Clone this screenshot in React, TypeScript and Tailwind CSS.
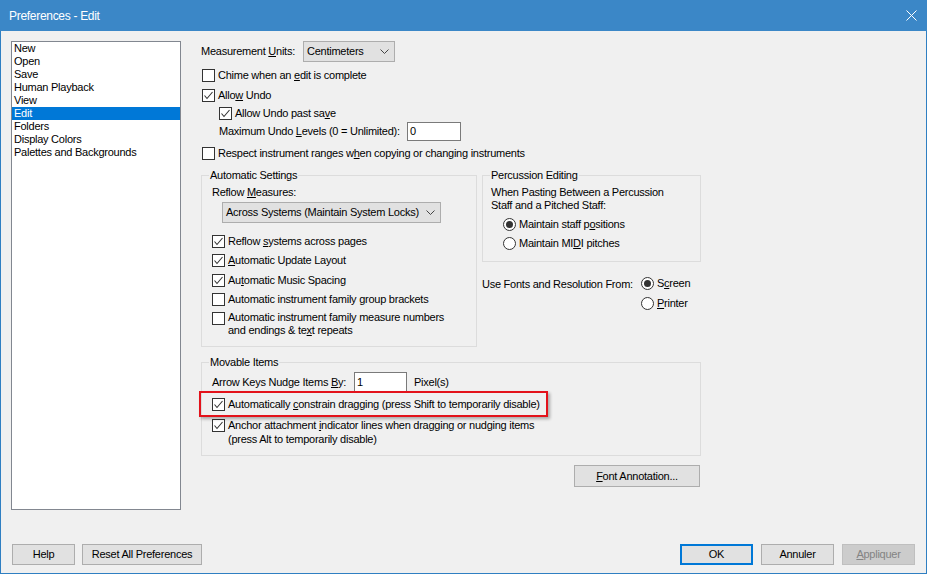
import React from 'react';

type Node = React.ReactNode;

function Box({ checked }: { checked?: boolean }) {
  return (
    <span className="w-[13px] h-[13px] shrink-0 border border-[#333333] bg-white flex items-center justify-center">
      {checked && (
        <svg width="11" height="11" viewBox="0 0 11 11">
          <path d="M1.5 5.5 L4 8.5 L9.5 2" stroke="#333333" strokeWidth="1.1" fill="none" />
        </svg>
      )}
    </span>
  );
}

function Radio({ on }: { on?: boolean }) {
  return (
    <span className="w-[13px] h-[13px] shrink-0 rounded-full border border-[#333333] bg-white flex items-center justify-center">
      {on && <span className="w-[7px] h-[7px] rounded-full bg-[#333333]" />}
    </span>
  );
}

function Check({ checked, label, h = 'h-[20px]', className = '' }: { checked?: boolean; label: Node; h?: string; className?: string }) {
  return (
    <div className={`flex items-center ${h} ${className}`}>
      <Box checked={checked} />
      <span className="ml-[3px] leading-[13px]">{label}</span>
    </div>
  );
}

function CheckMulti({ checked, lines, className = '', lead = 'leading-[13px]' }: { checked?: boolean; lines: Node[]; className?: string; lead?: string }) {
  return (
    <div className={`flex items-start ${className}`}>
      <Box checked={checked} />
      <div className={`ml-[3px] -mt-[1px] ${lead}`}>
        {lines.map((l, i) => (
          <div key={i}>{l}</div>
        ))}
      </div>
    </div>
  );
}

function U({ children }: { children: Node }) {
  return <span className="underline underline-offset-[1px] decoration-1">{children}</span>;
}

function Chevron() {
  return (
    <svg width="9" height="5" viewBox="0 0 9 5" className="shrink-0">
      <path d="M0.5 0.5 L4.5 4.5 L8.5 0.5" stroke="#444444" strokeWidth="1" fill="none" />
    </svg>
  );
}

function Group({ title, className, children }: { title: string; className: string; children: Node }) {
  return (
    <div className={`relative border border-[#dcdcdc] ${className}`}>
      <span className="absolute -top-[7px] left-[7px] px-[1px] bg-[#f0f0f0] leading-[13px]">{title}</span>
      {children}
    </div>
  );
}

function Button({ label, className = '', primary, disabled }: { label: Node; className?: string; primary?: boolean; disabled?: boolean }) {
  const base = disabled
    ? 'bg-[#cccccc] border border-[#bfbfbf] text-[#838383]'
    : primary
    ? 'bg-[#e1e1e1] border-2 border-[#0078d7] text-black'
    : 'bg-[#e1e1e1] border border-[#adadad] text-black';
  return <div className={`flex items-center justify-center h-[21px] ${base} ${className}`}>{label}</div>;
}

const items = ['New', 'Open', 'Save', 'Human Playback', 'View', 'Edit', 'Folders', 'Display Colors', 'Palettes and Backgrounds'];

export default function App() {
  return (
    <div className="w-[927px] h-[574px] flex flex-col bg-[#2f7fc2] font-['Liberation_Sans',Arial,sans-serif] text-[11px] tracking-[-0.25px] whitespace-nowrap text-black">
      <div className="h-[31px] shrink-0 bg-[#3b87c7] flex items-center justify-between pl-[9px] pr-[10px] text-white text-[12px]">
        <span className="tracking-[-0.3px]">Preferences - Edit</span>
        <svg width="11" height="11" viewBox="0 0 11 11">
          <path d="M0.5 0.5 L10.5 10.5 M10.5 0.5 L0.5 10.5" stroke="#ffffff" strokeWidth="1" />
        </svg>
      </div>

      <div className="flex-1 mx-px mb-px bg-[#f0f0f0] flex flex-col">
        <div className="flex pt-[10px] pl-[10px]">
          <div className="w-[170px] h-[469px] border border-[#828790] bg-white">
            {items.map((it) => (
              <div key={it} className={`h-[13px] leading-[13px] pl-[2px] ${it === 'Edit' ? 'bg-[#0078d7] text-white' : ''}`}>
                {it}
              </div>
            ))}
          </div>

          <div className="ml-[20px] w-[500px] flex flex-col">
            <div className="flex items-center h-[21px]">
              <span className="w-[102px]">Measurement <U>U</U>nits:</span>
              <div className="w-[92px] h-[21px] bg-[#e1e1e1] border border-[#adadad] flex items-center justify-between pl-[3px] pr-[5px]">
                <span>Centimeters</span>
                <Chevron />
              </div>
            </div>
            <Check className="mt-[3px] ml-px" label={<>Chime when an <U>e</U>dit is complete</>} />
            <Check className="ml-px" checked label={<>Allo<U>w</U> Undo</>} />
            <Check className="ml-[18px]" h="h-[17px]" checked label={<>Allow Undo past sa<U>v</U>e</>} />
            <div className="flex items-center h-[19px] ml-[18px]">
              <span className="w-[188px]">Maximum Undo <U>L</U>evels (0 = Unlimited):</span>
              <div className="w-[54px] h-[19px] border border-[#7a7a7a] bg-white pl-[2px] leading-[17px]">0</div>
            </div>
            <Check className="mt-[2px] ml-px" label={<>Respect instrument ranges w<U>h</U>en copying or changing instruments</>} />

            <div className="flex mt-[12px]">
              <Group title="Automatic Settings" className="w-[276px] h-[172px] pl-[10px] pt-[10px]">
                <div className="leading-[13px]">Reflow <U>M</U>easures:</div>
                <div className="mt-[3px] ml-[10px] w-[219px] h-[21px] bg-[#e1e1e1] border border-[#adadad] flex items-center justify-between pl-[3px] pr-[5px]">
                  <span>Across Systems (Maintain System Locks)</span>
                  <Chevron />
                </div>
                <Check className="mt-[8px]" checked label={<>Reflow <U>s</U>ystems across pages</>} />
                <Check h="h-[19px]" checked label={<><U>A</U>utomatic Update Layout</>} />
                <Check checked label={<>Au<U>t</U>omatic Music Spacing</>} />
                <Check h="h-[19px]" label={<>Automatic instrument family <U>g</U>roup brackets</>} />
                <CheckMulti
                  className="mt-[3px]"
                  lines={['Automatic instrument family measure numbers', <>and endings &amp; te<U>x</U>t repeats</>]}
                />
              </Group>

              <div className="ml-[5px] flex flex-col">
                <Group title="Percussion Editing" className="w-[219px] h-[87px] pl-[8px] pt-[10px]">
                  <div className="leading-[13px]">When Pasting Between a Percussion</div>
                  <div className="leading-[13px]">Staff and a Pitched Staff:</div>
                  <div className="mt-[3px] ml-[12px] flex items-center h-[19px]">
                    <Radio on />
                    <span className="ml-[3px]">Maintain staff p<U>o</U>sitions</span>
                  </div>
                  <div className="ml-[12px] flex items-center h-[19px]">
                    <Radio />
                    <span className="ml-[3px]">Maintain MI<U>D</U>I pitches</span>
                  </div>
                </Group>
                <div className="flex mt-[11px]">
                  <span className="w-[159px] leading-[20px] pt-px">Use Fonts and Resolution From:</span>
                  <div className="flex flex-col">
                    <div className="flex items-center h-[20px]">
                      <Radio on />
                      <span className="ml-[3px]">S<U>c</U>reen</span>
                    </div>
                    <div className="flex items-center h-[20px]">
                      <Radio />
                      <span className="ml-[3px]"><U>P</U>rinter</span>
                    </div>
                  </div>
                </div>
              </div>
            </div>

            <Group title="Movable Items" className="mt-[15px] w-[500px] h-[94px] pl-[10px] pt-[9px]">
              <div className="flex items-center h-[20px]">
                <span className="w-[142px]">Arrow Keys Nudge Items <U>B</U>y:</span>
                <div className="w-[53px] h-[20px] border border-[#7a7a7a] bg-white pl-[2px] leading-[18px]">1</div>
                <span className="ml-[7px]">Pixel(s)</span>
              </div>
              <Check className="mt-[2px]" checked label={<>Automatically <U>c</U>onstrain dragging (press Shift to temporarily disable)</>} />
              <CheckMulti
                className="mt-[5px]"
                lead="leading-[14px]"
                checked
                lines={[<>Anchor attachment <U>i</U>ndicator lines when dragging or nudging items</>, '(press Alt to temporarily disable)']}
              />
              <div className="absolute left-[-3px] top-[28px] w-[349px] h-[26px] border-2 border-[#e3121b] shadow-[2px_2px_3px_rgba(0,0,0,0.3)]" />
            </Group>

            <div className="flex justify-end mt-[9px] mr-px">
              <Button className="w-[126px] h-[22px]" label={<><U>F</U>ont Annotation...</>} />
            </div>
          </div>
        </div>

        <div className="flex justify-between mt-[34px] pl-[11px] pr-[11px]">
          <div className="flex gap-[7px]">
            <Button className="w-[63px]" label="Help" />
            <Button className="w-[120px]" label="Reset All Preferences" />
          </div>
          <div className="flex gap-[8px]">
            <Button className="w-[73px]" primary label="OK" />
            <Button className="w-[73px]" label="Annuler" />
            <Button className="w-[73px]" disabled label={<><U>A</U>ppliquer</>} />
          </div>
        </div>
      </div>
    </div>
  );
}
